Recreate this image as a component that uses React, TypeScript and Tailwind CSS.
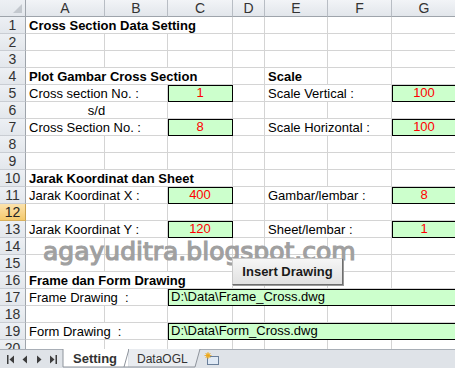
import React from "react";

type Kind = "plain" | "bold" | "green" | "greenL" | "center";
type Cell = { t?: string; span?: number; kind?: Kind };

const spanCls: Record<number, string> = {
  1: "",
  2: "col-span-2",
  3: "col-span-3",
  5: "col-span-5",
};

const E = (): Cell => ({});
const empty = (): Cell[] => [E(), E(), E(), E(), E(), E(), E()];

const labelRow = (a: string, c: string, e: string, g: string): Cell[] => [
  { t: a, span: 2 },
  { t: c, kind: "green" },
  E(),
  { t: e, span: 2 },
  { t: g, kind: "green" },
];

const rows: Record<number, Cell[]> = {
  1: [{ t: "Cross Section Data Setting", span: 3, kind: "bold" }, E(), E(), E(), E()],
  4: [
    { t: "Plot Gambar Cross Section", span: 3, kind: "bold" },
    E(),
    { t: "Scale", kind: "bold" },
    E(),
    E(),
  ],
  5: labelRow("Cross section No. :", "1", "Scale Vertical :", "100"),
  6: [{ t: "s/d", span: 2, kind: "center" }, E(), E(), E(), E(), E()],
  7: labelRow("Cross Section No. :", "8", "Scale Horizontal :", "100"),
  10: [{ t: "Jarak Koordinat dan Sheet", span: 3, kind: "bold" }, E(), E(), E(), E()],
  11: labelRow("Jarak Koordinat X :", "400", "Gambar/lembar :", "8"),
  13: labelRow("Jarak Koordinat Y :", "120", "Sheet/lembar :", "1"),
  16: [{ t: "Frame dan Form Drawing", span: 3, kind: "bold" }, E(), E(), E(), E()],
  17: [
    { t: "Frame Drawing  :", span: 2 },
    { t: "D:\\Data\\Frame_Cross.dwg", span: 5, kind: "greenL" },
  ],
  19: [
    { t: "Form Drawing  :", span: 2 },
    { t: "D:\\Data\\Form_Cross.dwg", span: 5, kind: "greenL" },
  ],
};

function DataCell({ c }: { c: Cell }) {
  const span = spanCls[c.span ?? 1];
  const kind = c.kind ?? "plain";
  let cls = "border-r border-b border-[#d4d4d4] whitespace-pre overflow-hidden px-[3px] leading-[17px]";
  if (kind === "bold") cls += " font-bold text-black";
  if (kind === "plain") cls += " text-black";
  if (kind === "center") cls += " text-center text-black";
  if (kind === "green")
    cls =
      "border-r border-b border-black shadow-[inset_1px_1px_0_0_#000] bg-[#ccffcc] text-center text-[#ff0000] leading-[16px] whitespace-pre overflow-hidden";
  if (kind === "greenL")
    cls =
      "border-r border-b border-black shadow-[inset_1px_1px_0_0_#000] bg-[#ccffcc] text-black px-[3px] leading-[16px] whitespace-pre overflow-hidden";
  return <div className={`${cls} ${span}`}>{c.t ?? ""}</div>;
}

function RowHeader({ n }: { n: number }) {
  const sel = n === 12;
  return (
    <div
      className={
        sel
          ? "border-r border-b border-r-[#c6a050] border-b-[#d9b15e] bg-gradient-to-b from-[#fbe2ad] to-[#f4c96b] text-center text-[#222] leading-[16px] text-[14px]"
          : "border-r border-b border-r-[#9ea4ab] border-b-[#c9cdd3] bg-gradient-to-b from-[#edf0f4] to-[#e3e7ec] text-center text-[#333] leading-[16px] text-[14px]"
      }
    >
      {n}
    </div>
  );
}

function Spreadsheet() {
  const letters = ["A", "B", "C", "D", "E", "F", "G"];
  const body: React.ReactNode[] = [];
  for (let r = 1; r <= 20; r++) {
    body.push(<RowHeader key={`h${r}`} n={r} />);
    const cells = rows[r] ?? empty();
    cells.forEach((c, i) => body.push(<DataCell key={`c${r}-${i}`} c={c} />));
  }
  return (
    <div className="grid grid-cols-[26px_79px_63px_65px_32px_63px_64px_65px] auto-rows-[17px] w-[457px]">
      <div className="relative border-r border-b border-[#9ea4ab] bg-gradient-to-b from-[#edf0f4] to-[#e3e7ec]">
        <svg className="absolute right-[3px] bottom-[3px]" width="9" height="9" viewBox="0 0 9 9">
          <polygon points="9,0 9,9 0,9" fill="#c3c8ce" />
        </svg>
      </div>
      {letters.map((l) => (
        <div
          key={l}
          className="border-r border-b border-r-[#b8bdc4] border-b-[#9ea4ab] bg-gradient-to-b from-[#f2f4f7] to-[#e2e6eb] text-center text-[#333] leading-[16px] text-[14px]"
        >
          {l}
        </div>
      ))}
      {body}
    </div>
  );
}

function Arrow({ dir, bar }: { dir: "l" | "r"; bar?: boolean }) {
  return (
    <svg width="8" height="9" viewBox="0 0 8 9">
      {dir === "l" ? (
        <>
          {bar && <rect x="0" y="0" width="1.5" height="9" fill="#3c3c3c" />}
          <polygon points={bar ? "7,0.5 7,8.5 2.5,4.5" : "6,0.5 6,8.5 1.5,4.5"} fill="#3c3c3c" />
        </>
      ) : (
        <>
          <polygon points={bar ? "1,0.5 1,8.5 5.5,4.5" : "2,0.5 2,8.5 6.5,4.5"} fill="#3c3c3c" />
          {bar && <rect x="6.5" y="0" width="1.5" height="9" fill="#3c3c3c" />}
        </>
      )}
    </svg>
  );
}

function TabBar() {
  return (
    <div className="relative h-[19px] bg-[#dfe3e8] border-t border-[#a8aeb6] flex items-center">
      <div className="flex items-center w-[62px] pl-[7px] gap-[6px]">
        <Arrow dir="l" bar />
        <Arrow dir="l" />
        <Arrow dir="r" />
        <Arrow dir="r" bar />
      </div>
      <svg className="absolute left-[58px] top-[-1px]" width="160" height="19" viewBox="0 0 160 19">
        <polygon points="5,0 70,0 70,18 5,18" fill="#ffffff" />
        <polyline points="5,0 5,18 66,18 71,0" fill="none" stroke="#8e949c" strokeWidth="1" />
        <polygon points="71,0 142,0 137,18 71,18" fill="#e9ecf0" />
        <polyline points="66,18 137,18 142,0" fill="none" stroke="#8e949c" strokeWidth="1" />
      </svg>
      <div className="absolute left-[73px] top-[1px] font-bold text-[#333] leading-[16px] text-[13px]">Setting</div>
      <div className="absolute left-[137px] top-[1px] text-[#333] leading-[16px] text-[12px]">DataOGL</div>
      <svg className="absolute left-[204px] top-[2px]" width="16" height="14" viewBox="0 0 16 14">
        <rect x="3.5" y="4.5" width="11" height="8" fill="#dfe9f5" stroke="#6a7f9a" />
        <path d="M5 12.5 L3.5 12.5 L3.5 10" fill="none" stroke="#6a7f9a" />
        <circle cx="4" cy="3.5" r="2.2" fill="#f5c342" />
        <path d="M4 0 L4 7 M0.5 3.5 L7.5 3.5 M1.5 1 L6.5 6 M6.5 1 L1.5 6" stroke="#e8a21c" strokeWidth="0.8" />
      </svg>
    </div>
  );
}

export default function App() {
  return (
    <div className="w-[455px] h-[368px] overflow-hidden bg-white font-['Liberation_Sans',Arial,sans-serif] text-[13px]">
      <div className="relative h-[349px] overflow-hidden">
        <Spreadsheet />
        <div className="absolute left-[43px] top-[239px] font-['DejaVu_Sans',sans-serif] text-[25px] leading-none text-[#a0a0a0] whitespace-nowrap [-webkit-text-stroke:1.2px_#a0a0a0]">
          agayuditra.blogspot.com
        </div>
        <div className="absolute left-[232px] top-[258px] w-[111px] h-[27px] border border-[#c8c8c8] border-r-[#6e6e6e] border-b-[#6e6e6e] shadow-[1px_1px_0_0_#9a9a9a] bg-gradient-to-b from-[#f6f6f6] to-[#e1e1e1] flex items-center justify-center font-bold text-[13px] text-[#1a1a1a]">
          Insert Drawing
        </div>
      </div>
      <TabBar />
    </div>
  );
}
